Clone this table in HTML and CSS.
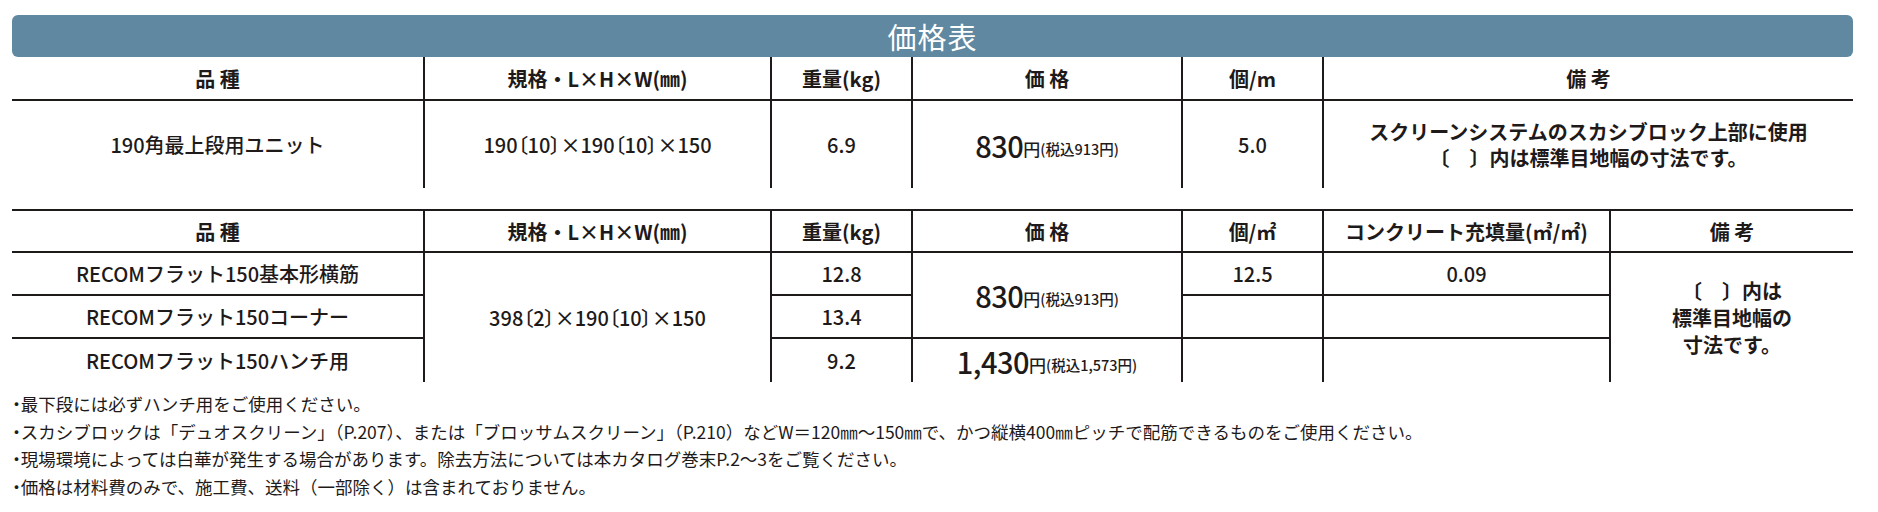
FILE: index.html
```html
<!DOCTYPE html>
<html lang="ja">
<head>
<meta charset="utf-8">
<title>価格表</title>
<link rel="stylesheet" href="styles.css">
</head>
<body>
<div class="page">
  <div class="title">価格表</div>

  <div class="t1">
    <div class="c h first">品 種</div>
    <div class="c h">規格・L×H×W(㎜)</div>
    <div class="c h">重量(kg)</div>
    <div class="c h">価 格</div>
    <div class="c h">個/m</div>
    <div class="c h">備 考</div>

    <div class="c d first">190角最上段用ユニット</div>
    <div class="c d"><span class="dim">190〔10〕×190〔10〕×150</span></div>
    <div class="c d">6.9</div>
    <div class="c d"><span class="price">830</span><span class="yen">円</span><span class="tax">(税込913円)</span></div>
    <div class="c d">5.0</div>
    <div class="c d note2"><span class="b">スクリーンシステムのスカシブロック上部に使用</span><span>〔　〕内は標準目地幅の寸法です。</span></div>
  </div>

  <div class="t2">
    <div class="c h first" style="grid-area:1/1">品 種</div>
    <div class="c h" style="grid-area:1/2">規格・L×H×W(㎜)</div>
    <div class="c h" style="grid-area:1/3">重量(kg)</div>
    <div class="c h" style="grid-area:1/4">価 格</div>
    <div class="c h" style="grid-area:1/5">個/㎡</div>
    <div class="c h" style="grid-area:1/6">コンクリート充填量(㎥/㎡)</div>
    <div class="c h" style="grid-area:1/7">備 考</div>

    <div class="c d first bb" style="grid-area:2/1">RECOMフラット150基本形横筋</div>
    <div class="c d first bb" style="grid-area:3/1">RECOMフラット150コーナー</div>
    <div class="c d first" style="grid-area:4/1">RECOMフラット150ハンチ用</div>

    <div class="c d" style="grid-area:2/2/5/3"><span class="dim">398〔2〕×190〔10〕×150</span></div>

    <div class="c d bb" style="grid-area:2/3">12.8</div>
    <div class="c d bb" style="grid-area:3/3">13.4</div>
    <div class="c d" style="grid-area:4/3">9.2</div>

    <div class="c d bb" style="grid-area:2/4/4/5"><span class="price">830</span><span class="yen">円</span><span class="tax">(税込913円)</span></div>
    <div class="c d" style="grid-area:4/4"><span class="price">1,430</span><span class="yen">円</span><span class="tax">(税込1,573円)</span></div>

    <div class="c d bb" style="grid-area:2/5">12.5</div>
    <div class="c d bb" style="grid-area:3/5"></div>
    <div class="c d" style="grid-area:4/5"></div>

    <div class="c d bb" style="grid-area:2/6">0.09</div>
    <div class="c d bb" style="grid-area:3/6"></div>
    <div class="c d" style="grid-area:4/6"></div>

    <div class="c d note3" style="grid-area:2/7/5/8"><span>〔　〕内は</span><span>標準目地幅の</span><span>寸法です。</span></div>
  </div>

  <ul class="notes">
    <li><span class="dot">・</span>最下段には必ずハンチ用をご使用ください。</li>
    <li><span class="dot">・</span>スカシブロックは「デュオスクリーン」（P.207）、または「ブロッサムスクリーン」（P.210）などW＝120㎜～150㎜で、かつ縦横400㎜ピッチで配筋できるものをご使用ください。</li>
    <li><span class="dot">・</span>現場環境によっては白華が発生する場合があります。除去方法については本カタログ巻末P.2～3をご覧ください。</li>
    <li><span class="dot">・</span>価格は材料費のみで、施工費、送料（一部除く）は含まれておりません。</li>
  </ul>
</div>
</body>
</html>
```

FILE: styles.css
```css
html, body {
  margin: 0;
  padding: 0;
  background: #ffffff;
}

body {
  font-family: "Noto Sans CJK JP", "Noto Sans", sans-serif;
  color: #1e1a1a;
}

.page {
  padding: 15px 25px 0 12px;
}

.title {
  height: 42px;
  background: #6088a1;
  border-radius: 6px;
  color: #ffffff;
  font-size: 29px;
  line-height: 1;
  display: flex;
  align-items: center;
  justify-content: center;
  letter-spacing: 1px;
}

.t1 {
  display: grid;
  grid-template-columns: 411px 347px 141px 270px 141px 531px;
  grid-template-rows: 44px 87px;
}

.t2 {
  margin-top: 21px;
  border-top: 2px solid #1e1a1a;
  display: grid;
  grid-template-columns: 411px 347px 141px 270px 141px 287px 244px;
  grid-template-rows: 42px 43px 43px 43px;
}

.c {
  box-sizing: border-box;
  display: flex;
  align-items: center;
  justify-content: center;
  text-align: center;
  border-left: 2px solid #1e1a1a;
  white-space: nowrap;
}

.c.first {
  border-left: none;
}

.h {
  font-size: 20px;
  font-weight: 700;
  border-bottom: 2px solid #1e1a1a;
}

.d {
  font-size: 20px;
  font-weight: 500;
}

.dim {
  font-feature-settings: "palt";
  font-size: 20px;
}

.bb {
  border-bottom: 2px solid #1e1a1a;
}

.price {
  font-size: 29px;
  font-weight: 500;
  letter-spacing: -0.5px;
}

.yen {
  font-size: 17px;
  font-weight: 500;
  margin-top: 7px;
}

.tax {
  font-size: 14.5px;
  font-weight: 500;
  margin-top: 7px;
}

.note2 {
  flex-direction: column;
  font-size: 20px;
  line-height: 26px;
  font-weight: 700;
}

.note3 {
  flex-direction: column;
  font-size: 20px;
  line-height: 27px;
  font-weight: 700;
}

.notes {
  list-style: none;
  margin: 8px 0 0 0;
  padding: 0;
  font-size: 17.5px;
  line-height: 27.5px;
  white-space: nowrap;
}

.dot {
  font-feature-settings: "palt";
}
```
